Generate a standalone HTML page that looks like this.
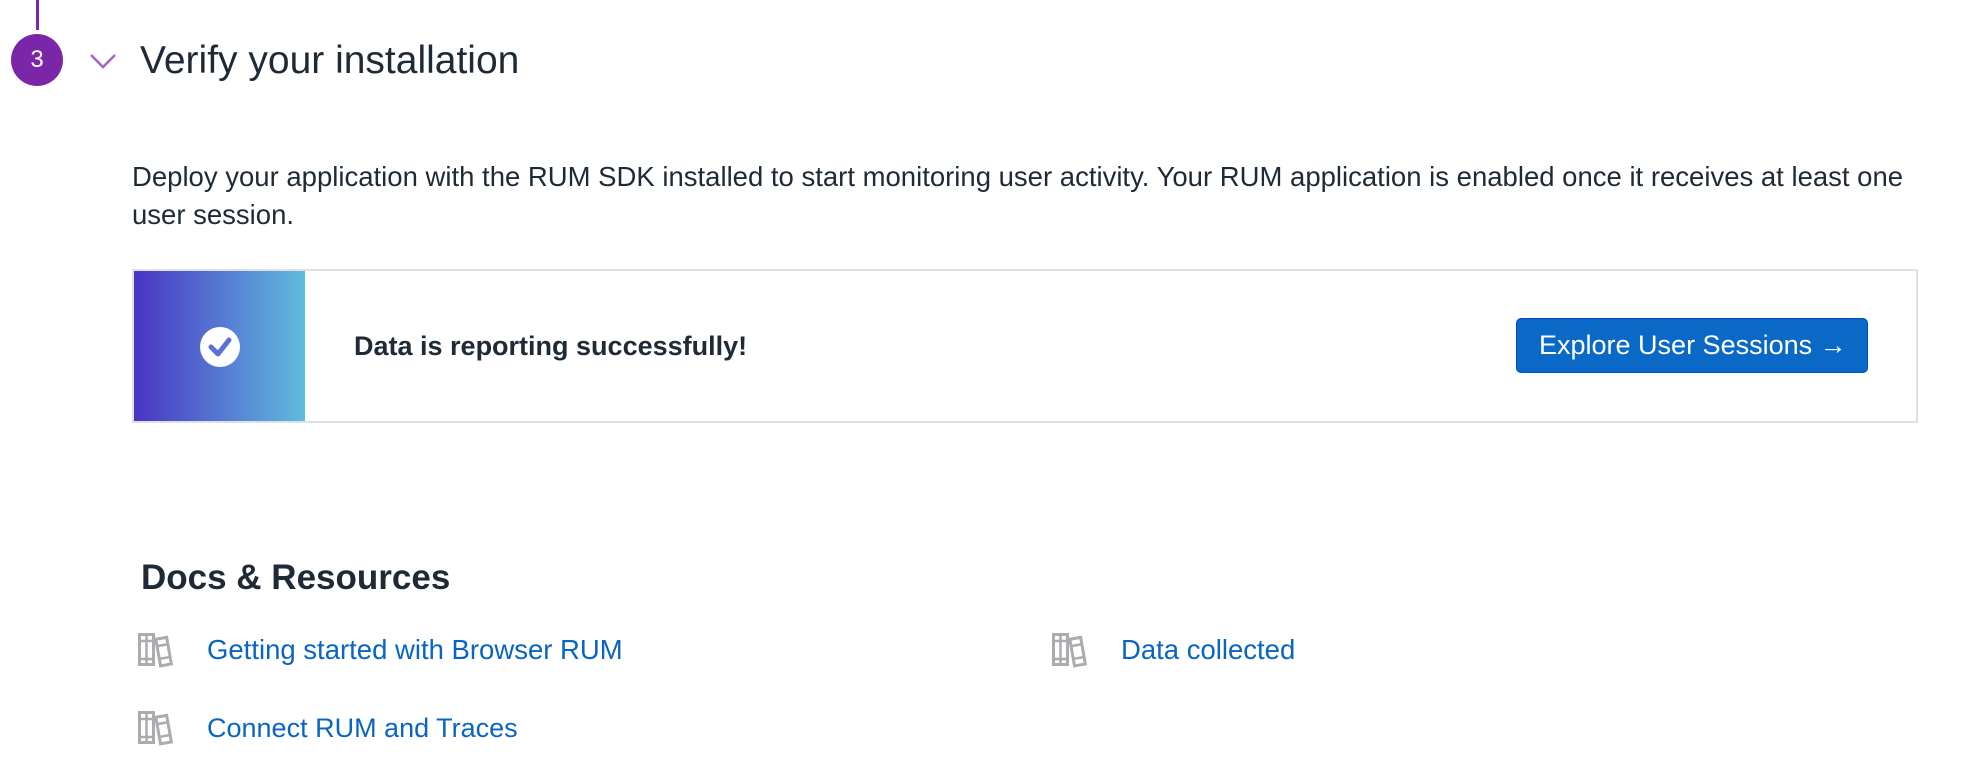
<!DOCTYPE html>
<html><head><meta charset="utf-8"><style>
body{margin:0;width:1964px;height:758px;background:#fff;font-family:"Liberation Sans",sans-serif;color:#1f2a37;position:relative;overflow:hidden}
.a{position:absolute;white-space:nowrap}
.link{color:#0a64c2;font-size:27.5px}
</style></head><body>
<div class="a" style="left:36px;top:0;width:3px;height:30px;background:#7b25a8"></div>
<div class="a" style="left:11px;top:34px;width:52px;height:52px;border-radius:50%;background:#7b25a8;color:#fff;font-size:24px;line-height:52px;text-align:center">3</div>
<svg class="a" style="left:89px;top:50px" width="28" height="22" viewBox="0 0 28 22"><path d="M2 5 L14 17 L26 5" fill="none" stroke="#a865c9" stroke-width="2.6"/></svg>
<div class="a" style="left:140px;top:37px;font-size:39px;line-height:48px">Verify your installation</div>
<div class="a" style="left:132px;top:158px;font-size:27.5px;line-height:37.5px">Deploy your application with the RUM SDK installed to start monitoring user activity. Your RUM application is enabled once it receives at least one<br>user session.</div>
<div class="a" style="left:132px;top:269px;width:1782px;height:150px;border:2px solid #dfe0e5;background:#fff"></div>
<div class="a" style="left:134px;top:271px;width:171px;height:150px;background:linear-gradient(90deg,#4a34c4,#5fbcde)"></div>
<svg class="a" style="left:200px;top:327px" width="40" height="40" viewBox="0 0 40 40"><circle cx="20" cy="20" r="20" fill="#fff"/><path d="M11 20 L18 27 L29 13" fill="none" stroke="#5a72d6" stroke-width="5" stroke-linecap="round" stroke-linejoin="round"/></svg>
<div class="a" style="left:354px;top:329px;font-size:27px;font-weight:bold;line-height:34px">Data is reporting successfully!</div>
<div class="a" style="left:1516px;top:318px;width:352px;height:55px;box-sizing:border-box;border:1px solid #0450b8;border-radius:5px;background:#0a69c7;color:#fff;font-size:27px;line-height:53px;padding-left:22px">Explore User Sessions <span style="font-weight:bold">&rarr;</span></div>
<div class="a" style="left:141px;top:556px;font-size:35px;font-weight:bold;line-height:44px">Docs &amp; Resources</div>
<svg width="0" height="0" style="position:absolute"><defs><g id="bk"><rect x="1.5" y="1.5" width="14" height="30" fill="none" stroke="#ababb0" stroke-width="3"/><path d="M8.5 1.5 V31.5 M1.5 8 H15.5 M1.5 26 H15.5" stroke="#ababb0" stroke-width="2.5"/><g transform="rotate(-10 26 18)"><rect x="20" y="5" width="11" height="27" fill="none" stroke="#ababb0" stroke-width="3"/><path d="M20 12 H31 M20 25 H31" stroke="#ababb0" stroke-width="2.5"/></g></g></defs></svg>
<svg class="a" style="left:138px;top:633px" width="38" height="36"><use href="#bk"/></svg>
<div class="a link" style="left:207px;top:634px;line-height:32px">Getting started with Browser RUM</div>
<svg class="a" style="left:1052px;top:633px" width="38" height="36"><use href="#bk"/></svg>
<div class="a link" style="left:1121px;top:634px;line-height:32px">Data collected</div>
<svg class="a" style="left:138px;top:711px" width="38" height="36"><use href="#bk"/></svg>
<div class="a link" style="left:207px;top:712px;line-height:32px;font-size:27px">Connect RUM and Traces</div>
</body></html>
